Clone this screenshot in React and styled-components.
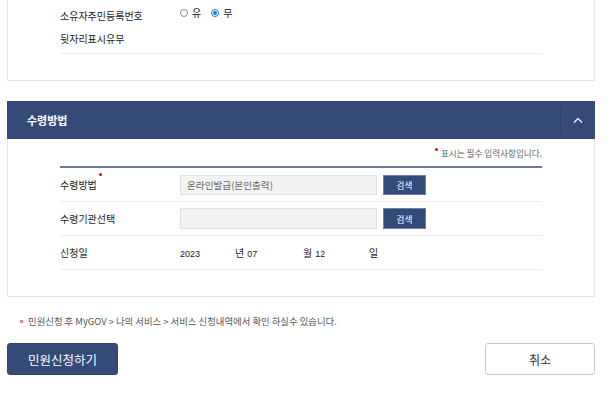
import React from "react";
import styled, { createGlobalStyle } from "styled-components";

const Global = createGlobalStyle`
  html, body { margin: 0; padding: 0; background: #fff; }
  body { font-family: "Noto Sans CJK KR", "Noto Sans", sans-serif; color: #333; }
  * { box-sizing: border-box; }
`;

const NAVY = "#344b7a";

const Page = styled.div`
  width: 613px;
  padding: 0 18px 0 7px;
`;

const Panel = styled.section`
  border: 1px solid #e6e6e6;
  border-top: none;
  padding: 0 52px 26px 52px;
  background: #fff;
`;

const Row = styled.div`
  display: flex;
  align-items: ${(p) => (p.$top ? "flex-start" : "center")};
  height: ${(p) => p.$h || 34}px;
  border-bottom: 1px solid #ededed;
`;

const Label = styled.div`
  width: 120px;
  flex: none;
  font-size: 10px;
  line-height: ${(p) => p.$lh || 14}px;
  color: #222;
  padding-top: ${(p) => p.$pt || 0}px;
`;

const Req = styled.span`
  position: relative;
  &::after {
    content: "";
    position: absolute;
    right: -5px;
    top: -4px;
    width: 3px;
    height: 3px;
    border-radius: 50%;
    background: #e60012;
  }
`;

const RadioGroup = styled.div`
  display: flex;
  align-items: center;
  gap: 2px;
  padding-top: 6px;
  font-size: 10px;
  line-height: 14px;
  color: #222;
`;

const RadioDot = styled.span`
  width: 8px;
  height: 8px;
  border-radius: 50%;
  border: 1px solid ${(p) => (p.$on ? "#1a73e8" : "#8a8a8a")};
  display: inline-flex;
  align-items: center;
  justify-content: center;
  margin-left: ${(p) => (p.$first ? 0 : 8)}px;
  margin-right: 2px;
  &::after {
    content: "";
    width: 4px;
    height: 4px;
    border-radius: 50%;
    background: ${(p) => (p.$on ? "#1a73e8" : "transparent")};
  }
`;

const Header = styled.header`
  margin-top: 20px;
  height: 38px;
  background: ${NAVY};
  display: flex;
  align-items: center;
  justify-content: space-between;
  padding-left: 20px;
`;

const Title = styled.h2`
  margin: 0;
  font-size: 11px;
  font-weight: 700;
  color: #fff;
`;

const Toggle = styled.button`
  width: 35px;
  height: 25px;
  border: none;
  border-left: 1px solid #2b3f69;
  background: transparent;
  display: flex;
  align-items: center;
  justify-content: center;
  padding: 0;
`;

const Note = styled.p`
  margin: 0;
  padding-top: 8px;
  height: 27px;
  text-align: right;
  font-size: 8.6px;
  line-height: 12px;
  color: #666;
`;

const RedDot = styled.span`
  display: inline-block;
  width: 3px;
  height: 3px;
  border-radius: 50%;
  background: #e60012;
  vertical-align: 6px;
  margin-right: 3px;
`;

const Table = styled.div`
  border-top: 2px solid #6b7899;
`;

const Field = styled.div`
  width: 197px;
  height: ${(p) => p.$h || 20}px;
  background: #f3f3f3;
  border: 1px solid #e2e2e2;
  font-size: 9.6px;
  line-height: ${(p) => (p.$h || 20) - 2}px;
  color: #666;
  padding-left: 6px;
`;

const SearchBtn = styled.button`
  margin-left: 6px;
  width: 43px;
  height: ${(p) => p.$h || 20}px;
  background: ${NAVY};
  border: 1px solid #6b80aa;
  color: #fff;
  font-family: inherit;
  font-size: 8.6px;
  padding: 0;
`;

const DatePart = styled.span`
  display: inline-block;
  width: ${(p) => p.$w}px;
  font-size: 10px;
  color: #222;
`;

const Num = styled.span`
  font-family: "Liberation Sans", Arial, sans-serif;
  font-size: 9px;
  margin-left: ${(p) => p.$ml || 0}px;
`;

const Notice = styled.p`
  margin: 18px 0 0 13px;
  font-size: 9.4px;
  line-height: 12px;
  color: #555;
  display: flex;
  align-items: center;
`;

const Bullet = styled.span`
  width: 3px;
  height: 3px;
  background: #f08080;
  margin-right: 5px;
  flex: none;
`;

const Actions = styled.div`
  margin-top: 16px;
  display: flex;
  justify-content: space-between;
`;

const ActionBtn = styled.button`
  width: ${(p) => p.$w}px;
  height: 32px;
  border-radius: 3px;
  font-family: inherit;
  font-size: ${(p) => (p.$primary ? 12.5 : 12)}px;
  background: ${(p) => (p.$primary ? NAVY : "#fff")};
  color: ${(p) => (p.$primary ? "#fff" : "#333")};
  border: 1px solid ${(p) => (p.$primary ? "#2f446e" : "#c9c9c9")};
  padding: 0;
`;

export default function App() {
  return (
    <Page>
      <Global />
      <Panel>
        <Row $top $h={54}>
          <Label $lh={23} $pt={4}>
            소유자주민등록번호
            <br />
            뒷자리표시유무
          </Label>
          <RadioGroup>
            <RadioDot $first /> 유
            <RadioDot $on /> 무
          </RadioGroup>
        </Row>
      </Panel>

      <Header>
        <Title>수령방법</Title>
        <Toggle aria-label="접기">
          <svg width="10" height="6" viewBox="0 0 10 6">
            <polyline points="1,5.5 5,1.5 9,5.5" fill="none" stroke="#fff" strokeWidth="1.2" />
          </svg>
        </Toggle>
      </Header>
      <Panel>
        <Note>
          <RedDot />
          표시는 필수 입력사항입니다.
        </Note>
        <Table>
          <Row>
            <Label>
              <Req>수령방법</Req>
            </Label>
            <Field>온라인발급(본인출력)</Field>
            <SearchBtn>검색</SearchBtn>
          </Row>
          <Row>
            <Label>수령기관선택</Label>
            <Field $h={21} />
            <SearchBtn $h={21}>검색</SearchBtn>
          </Row>
          <Row>
            <Label>신청일</Label>
            <DatePart $w={55}>
              <Num>2023</Num>
            </DatePart>
            <DatePart $w={68}>
              년<Num $ml={3}>07</Num>
            </DatePart>
            <DatePart $w={66}>
              월<Num $ml={3}>12</Num>
            </DatePart>
            <DatePart $w={20}>일</DatePart>
          </Row>
        </Table>
      </Panel>

      <Notice>
        <Bullet />
        민원신청 후 MyGOV &gt; 나의 서비스 &gt; 서비스 신청내역에서 확인 하실수 있습니다.
      </Notice>

      <Actions>
        <ActionBtn $primary $w={111}>민원신청하기</ActionBtn>
        <ActionBtn $w={110}>취소</ActionBtn>
      </Actions>
    </Page>
  );
}
